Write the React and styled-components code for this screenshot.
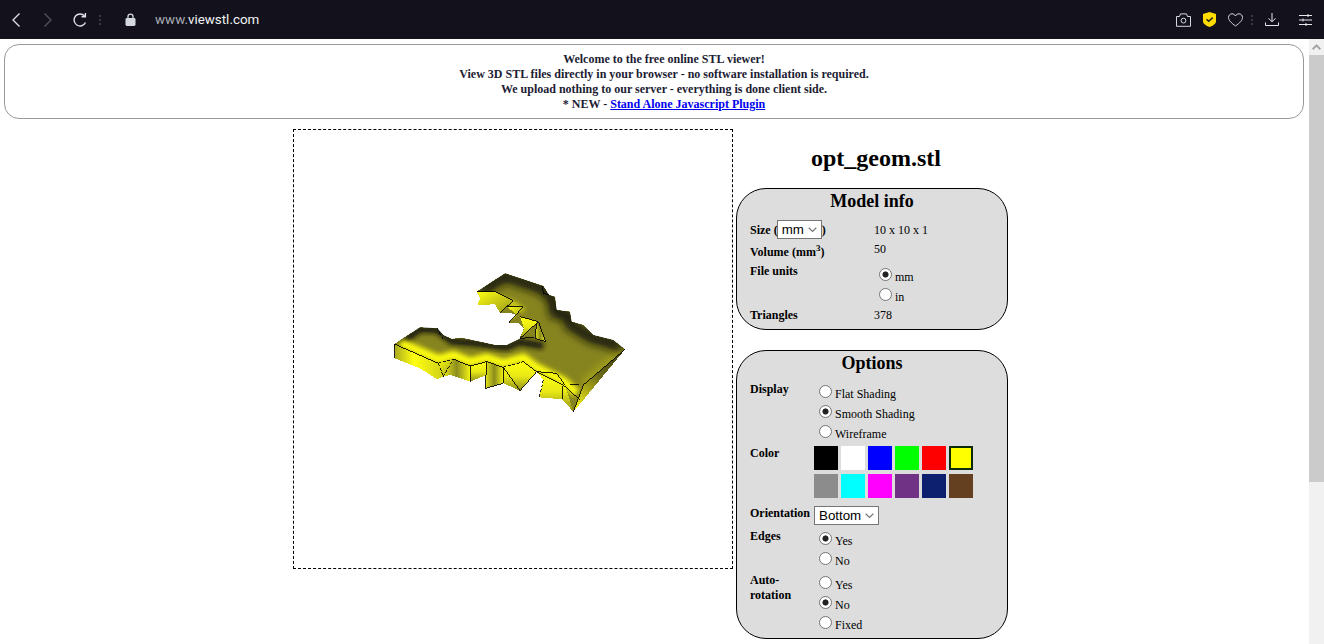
import React from "react";
import styled, { createGlobalStyle } from "styled-components";

const GlobalStyle = createGlobalStyle`
  html, body {
    margin: 0;
    padding: 0;
    height: 100%;
    overflow: hidden;
    background: #fff;
  }
  body {
    font-family: "Liberation Serif", "Times New Roman", serif;
    font-size: 12px;
    color: #000;
  }
`;

const topSurface =
  "43,252 120,202 172,205 190,225 215,237 245,233 290,243 345,255 380,255 418,237 432,205 415,190 385,190 412,165 385,158 362,158 345,133 292,135 300,115 290,95 375,40 490,78 507,105 525,110 530,150 570,155 575,185 610,195 640,225 700,240 735,268 610,375 580,455 555,375 470,335 430,305 370,322 320,305 270,318 220,297 175,310";

const sideFaces = [
  { points: "43,252 175,310 190,350 172,358 120,325 45,295", fill: "url(#wallLeft)" },
  { points: "175,310 220,297 190,350", fill: "url(#wallB)" },
  { points: "220,297 270,318 270,365 210,345 190,350", fill: "url(#wallD)" },
  { points: "270,318 320,305 320,345 270,365", fill: "url(#wallA)" },
  { points: "320,305 370,322 370,370 316,385", fill: "url(#wallD)" },
  { points: "370,322 430,305 470,335 420,392 370,370", fill: "url(#wallA)" },
  { points: "470,335 555,375 580,455 547,418 478,412 490,360", fill: "url(#wallA)" },
  { points: "735,268 610,375 580,455 610,420", fill: "url(#wallRight)" },
  { points: "290,95 345,95 400,122 360,158 345,133 292,135 300,115", fill: "url(#wallB)" },
  { points: "380,140 430,140 385,190 412,165", fill: "url(#wallB)" },
  { points: "420,170 475,185 420,235 432,205", fill: "url(#wallA)" },
  { points: "470,185 497,245 465,235", fill: "url(#wallD)" },
];

const edgeLines = [
  "43,252 175,310",
  "220,297 270,318 320,305 370,322",
  "430,305 470,335 550,375 600,420",
  "270,318 270,365",
  "320,305 316,385 370,370 370,322 420,392 470,335",
  "547,378 547,418",
  "735,268 610,375 580,455",
  "470,335 530,340 555,375",
  "570,373 597,373",
  "290,95 345,95 400,122 360,158",
  "380,140 430,140 385,190",
  "420,170 475,185 420,235 462,232",
  "475,185 497,245 465,235 470,190",
  "487,78 490,100 507,105",
  "43,252 45,295",
];

// these edges flicker through the surface in the viewer, so they come out broken
const brokenLines = [
  "175,310 220,297",
  "370,322 430,305",
  "175,310 190,350",
  "190,350 220,297",
  "490,360 478,412",
  "172,205 190,240",
];

const Model = () => (
  <ModelSvg viewBox="0 0 780 480">
    <defs>
      <linearGradient id="wallLeft" x1="0" y1="0" x2="1" y2="0">
        <stop offset="0" stopColor="#a8a820" />
        <stop offset="0.4" stopColor="#ffff10" />
        <stop offset="1" stopColor="#d0d018" />
      </linearGradient>
      <linearGradient id="wallA" x1="0" y1="0" x2="0" y2="1">
        <stop offset="0" stopColor="#ffff10" />
        <stop offset="0.5" stopColor="#e8e816" />
        <stop offset="1" stopColor="#8f8f1e" />
      </linearGradient>
      <linearGradient id="wallB" x1="0" y1="0" x2="1" y2="1">
        <stop offset="0" stopColor="#ffff10" />
        <stop offset="1" stopColor="#98981c" />
      </linearGradient>
      <linearGradient id="wallRight" gradientUnits="userSpaceOnUse" x1="730" y1="265" x2="590" y2="440">
        <stop offset="0" stopColor="#3a3a12" />
        <stop offset="0.5" stopColor="#6e6c18" />
        <stop offset="1" stopColor="#f0ee14" />
      </linearGradient>
      <linearGradient id="wallD" x1="0" y1="0" x2="1" y2="0">
        <stop offset="0" stopColor="#e6e618" />
        <stop offset="0.5" stopColor="#8c8c1e" />
        <stop offset="1" stopColor="#f2f214" />
      </linearGradient>
      <clipPath id="topClip">
        <polygon points={topSurface} />
      </clipPath>
      <filter id="softSmall" x="-30%" y="-30%" width="160%" height="160%">
        <feGaussianBlur stdDeviation="8" />
      </filter>
      <filter id="softWide" x="-30%" y="-30%" width="160%" height="160%">
        <feGaussianBlur stdDeviation="13" />
      </filter>
    </defs>
    <polygon points={topSurface} fill="#86841f" shapeRendering="crispEdges" />
    <g clipPath="url(#topClip)">
      <polyline
        points="60,250 120,207 172,210 215,244 290,250 380,262 418,246 490,258"
        fill="none"
        stroke="#14140a"
        strokeWidth="20"
        filter="url(#softSmall)"
      />
      <polyline
        points="300,95 375,48 488,86 520,118 525,158 565,163 570,193 635,233 695,248 730,272"
        fill="none"
        stroke="#14140a"
        strokeWidth="34"
        filter="url(#softWide)"
      />
      <polyline
        points="60,248 175,298 220,285 270,306 320,293 370,310 430,293 470,323 550,363 590,400"
        fill="none"
        stroke="#ffff10"
        strokeWidth="26"
        filter="url(#softSmall)"
      />
      <polyline
        points="330,108 400,132 430,152"
        fill="none"
        stroke="#f4f212"
        strokeWidth="12"
        filter="url(#softSmall)"
      />
      <polyline
        points="735,268 610,375"
        fill="none"
        stroke="#c8c61a"
        strokeWidth="20"
        opacity="0.6"
        filter="url(#softWide)"
      />
    </g>
    {sideFaces.map((face) => (
      <polygon key={face.points} points={face.points} fill={face.fill} shapeRendering="crispEdges" />
    ))}
    {edgeLines.map((line) => (
      <polyline key={line} points={line} fill="none" stroke="#000" strokeWidth="2.6" shapeRendering="crispEdges" />
    ))}
    {brokenLines.map((line) => (
      <polyline key={line} points={line} fill="none" stroke="#000" strokeWidth="2.6" strokeDasharray="9 5" shapeRendering="crispEdges" />
    ))}
  </ModelSvg>
);

const BackIcon = ({ dim }) => (
  <svg width="10" height="16" viewBox="0 0 10 16" fill="none" stroke={dim ? "#55545c" : "#dfe1e6"} strokeWidth="1.3">
    {dim ? <path d="M1.500 1.500 8 8l-6.500 6.500" /> : <path d="M8.500 1.500 2 8l6.500 6.500" />}
  </svg>
);

const ReloadIcon = () => (
  <svg width="16" height="16" viewBox="0 0 16 16" fill="none" stroke="#dfe1e6" strokeWidth="1.4">
    <path d="M13.500 10.500A6 6 0 1 1 12.600 4" />
    <path d="M13.400 .9v3.800H9.600" />
  </svg>
);

const LockIcon = () => (
  <svg width="11" height="13" viewBox="0 0 11 13">
    <path d="M3 5.500V3.600a2.500 2.500 0 0 1 5 0v1.900" fill="none" stroke="#d5d8de" strokeWidth="1.300" />
    <rect x="0.500" y="5" width="10" height="8" rx="1.400" fill="#d5d8de" />
  </svg>
);

const CameraIcon = () => (
  <svg width="15" height="14" viewBox="0 0 15 14" fill="none" stroke="#d5d8de" strokeWidth="1">
    <path d="M.5 3.500h3l1-2.600h6l1 2.600h3v9.800H.5z" />
    <circle cx="7.500" cy="7.600" r="2.400" />
  </svg>
);

const ShieldIcon = () => (
  <svg width="13" height="15" viewBox="0 0 13 15">
    <path d="M6.500 0 13 2v7.500c0 2-3 4.400-6.500 5.500C3 13.900 0 11.500 0 9.500V2z" fill="#ffdd00" />
    <path d="M3.500 7.200 5.700 9.300 9.700 5.600" fill="none" stroke="#222" strokeWidth="1.500" />
  </svg>
);

const HeartIcon = () => (
  <svg width="15" height="14" viewBox="0 0 15 14" fill="none" stroke="#d5d8de" strokeWidth="1">
    <path d="M7.500 13C3.500 10 .5 7.500 .5 4.500 .5 2.300 2.200.8 4 .8c1.500 0 2.800.8 3.500 2.200C8.200 1.600 9.500.8 11 .8c1.800 0 3.500 1.500 3.500 3.700 0 3-3 5.500-7 8.500z" />
  </svg>
);

const DownloadIcon = () => (
  <svg width="14" height="13" viewBox="0 0 14 13" fill="none" stroke="#e6e8ec" strokeWidth="1">
    <path d="M7 0v8.500M3.500 5.300 7 8.800l3.500-3.500M.5 9.500v3h13v-3" />
  </svg>
);

const SlidersIcon = () => (
  <svg width="13" height="12" viewBox="0 0 13 12" fill="none" stroke="#e6e8ec" strokeWidth="1">
    <path d="M0 1.500h13M0 6h13M0 10.500h13M9 0v3M4 4.500v3M7 9v3" />
  </svg>
);

const swatches = [
  "#000000", "#ffffff", "#0000ff", "#00ff00", "#ff0000", "#ffff00",
  "#8c8c8c", "#00ffff", "#ff00ff", "#6f3284", "#0d2070", "#644020",
];

const RadioGroup = ({ name, options, checked, top }) => (
  <RadioColumn $top={top}>
    {options.map((option) => (
      <RadioLine key={option}>
        <input type="radio" name={name} defaultChecked={option === checked} />
        {option}
      </RadioLine>
    ))}
  </RadioColumn>
);

export default function App() {
  return (
    <>
      <GlobalStyle />
      <Shell>
        <BrowserBar>
          <NavButton $w={32}><BackIcon /></NavButton>
          <NavButton $w={32}><BackIcon dim /></NavButton>
          <NavButton $w={32}><ReloadIcon /></NavButton>
          <BarDots />
          <LockSlot><LockIcon /></LockSlot>
          <Url>www.<b>viewstl.com</b></Url>
          <BarRight>
            <NavButton $w={26}><CameraIcon /></NavButton>
            <NavButton $w={26}><ShieldIcon /></NavButton>
            <NavButton $w={26}><HeartIcon /></NavButton>
            <BarDots />
            <NavButton $w={32}><DownloadIcon /></NavButton>
            <NavButton $w={34}><SlidersIcon /></NavButton>
          </BarRight>
        </BrowserBar>
        <Viewport>
          <Page>
            <Banner>
              Welcome to the free online STL viewer!<br />
              View 3D STL files directly in your browser - no software installation is required.<br />
              We upload nothing to our server - everything is done client side.<br />
              * NEW - <a href="#plugin">Stand Alone Javascript Plugin</a>
            </Banner>
            <Main>
              <Viewer><Model /></Viewer>
              <Side>
                <FileName>opt_geom.stl</FileName>
                <Panel $height={142}>
                  <PanelTitle>Model info</PanelTitle>
                  <Row $label={124} $height={22}>
                    <SizeLabel>Size (<select defaultValue="mm"><option>mm</option><option>in</option></select>)</SizeLabel>
                    <Value $top={3}>10 x 10 x 1</Value>
                  </Row>
                  <Row $label={124} $height={20}>
                    <Label $top={3}>Volume (mm<sup>3</sup>)</Label>
                    <Value $top={0}>50</Value>
                  </Row>
                  <Row $label={124} $height={44}>
                    <Label $top={2}>File units</Label>
                    <RadioGroup name="units" options={["mm", "in"]} checked="mm" top={3} />
                  </Row>
                  <Row $label={124} $height={18}>
                    <Label $top={2}>Triangles</Label>
                    <Value $top={2}>378</Value>
                  </Row>
                </Panel>
                <Panel $height={289} $gap={20}>
                  <PanelTitle>Options</PanelTitle>
                  <Row $label={64} $height={64}>
                    <Label>Display</Label>
                    <RadioGroup name="display" options={["Flat Shading", "Smooth Shading", "Wireframe"]} checked="Smooth Shading" />
                  </Row>
                  <Row $label={64} $height={60}>
                    <Label>Color</Label>
                    <Swatches>
                      {swatches.map((color) => (
                        <Swatch key={color} $color={color} $active={color === "#ffff00"} />
                      ))}
                    </Swatches>
                  </Row>
                  <Row $label={64} $height={23}>
                    <Label>Orientation</Label>
                    <select defaultValue="Bottom"><option>Bottom</option><option>Top</option></select>
                  </Row>
                  <Row $label={64} $height={44}>
                    <Label>Edges</Label>
                    <RadioGroup name="edges" options={["Yes", "No"]} checked="Yes" />
                  </Row>
                  <Row $label={64} $height={60}>
                    <Label>Auto-<br />rotation</Label>
                    <RadioGroup name="rotation" options={["Yes", "No", "Fixed"]} checked="No" />
                  </Row>
                </Panel>
              </Side>
            </Main>
          </Page>
          <Scrollbar>
            <ScrollButton>
              <svg width="9" height="6" viewBox="0 0 9 6"><path d="M4.500 0 9 4.500 7.700 6 4.500 2.800 1.300 6 0 4.500z" fill="#a3a3a3" /></svg>
            </ScrollButton>
            <ScrollThumb />
          </Scrollbar>
        </Viewport>
      </Shell>
    </>
  );
}

const Shell = styled.div`
  height: 100vh;
  display: flex;
  flex-direction: column;
`;

const BrowserBar = styled.div`
  height: 39px;
  flex: none;
  display: flex;
  align-items: center;
  background: #13121c;
`;

const NavButton = styled.div`
  width: ${(p) => p.$w}px;
  display: flex;
  justify-content: center;
  align-items: center;
`;

const BarDots = styled.span`
  width: 2px;
  height: 10px;
  margin: 0 3px;
  flex: none;
  background: repeating-linear-gradient(#3a3a44 0 2px, transparent 2px 4px);
`;

const LockSlot = styled.div`
  margin-left: 21px;
  display: flex;
`;

const Url = styled.div`
  margin-left: 19px;
  font-family: "Roboto", "Liberation Sans", sans-serif;
  font-size: 13.4px;
  color: #a9adb5;

  & b {
    font-weight: 400;
    color: #f2f3f5;
  }
`;

const BarRight = styled.div`
  margin-left: auto;
  display: flex;
  align-items: center;
  padding-right: 2px;
`;

const Viewport = styled.div`
  flex: 1;
  min-height: 0;
  display: flex;
`;

const Page = styled.div`
  flex: 1;
  min-width: 0;
  overflow: hidden;
`;

const Banner = styled.div`
  margin: 5px 5px 0 4px;
  padding: 7px 0 6px 20px;
  height: 75px;
  box-sizing: border-box;
  border: 1px solid #999;
  border-radius: 15px;
  text-align: center;
  font-weight: 700;
  font-size: 12px;
  line-height: 15px;
  color: #1c1c33;

  & a {
    color: #0000ee;
  }
`;

const Main = styled.div`
  margin: 10px 0 0 293px;
  display: flex;
  gap: 3px;
`;

const Viewer = styled.div`
  width: 440px;
  height: 440px;
  flex: none;
  box-sizing: border-box;
  border: 1px dashed #000;
  padding: 130px 0 0 86px;
`;

const ModelSvg = styled.svg`
  display: block;
  width: 260px;
  height: 160px;
`;

const Side = styled.div`
  width: 272px;
  flex: none;
`;

const FileName = styled.h1`
  margin: 15px 0 16px;
  padding-left: 8px;
  text-align: center;
  font-size: 24px;
  line-height: 28px;
  font-weight: 700;
  white-space: nowrap;
`;

const Panel = styled.section`
  height: ${(p) => p.$height}px;
  margin-top: ${(p) => p.$gap || 0}px;
  box-sizing: border-box;
  padding: 2px 0 0 13px;
  border: 1px solid #000;
  border-radius: 30px;
  background: #ddd;

  & select {
    appearance: none;
    height: 19px;
    padding: 0 16px 0 4px;
    font-family: "Liberation Sans", Arial, sans-serif;
    font-size: 13.33px;
    color: #000;
    background: #fff url("data:image/svg+xml,%3Csvg xmlns='http://www.w3.org/2000/svg' width='9' height='6'%3E%3Cpath d='M.7.8 4.500 4.500 8.300.8' fill='none' stroke='%23777' stroke-width='1.200'/%3E%3C/svg%3E") no-repeat right 4px center;
    border: 1px solid #767676;
    border-radius: 0;
    justify-self: start;
    outline: none;
  }
`;

const PanelTitle = styled.h3`
  margin: 0 0 8px -13px;
  text-align: center;
  font-size: 18px;
  line-height: 21px;
  font-weight: 700;
`;

const Row = styled.div`
  display: grid;
  grid-template-columns: ${(p) => p.$label}px 1fr;
  height: ${(p) => p.$height}px;
  line-height: 15px;
`;

const Label = styled.div`
  font-weight: 700;
  padding-top: ${(p) => p.$top || 0}px;
  white-space: nowrap;

  & sup {
    font-size: 9px;
    line-height: 0;
  }
`;

const SizeLabel = styled.div`
  display: flex;
  align-items: center;
  align-self: start;
  height: 21px;
  font-weight: 700;
  white-space: pre;

  & select {
    margin: 0 0 2px -1px;
  }
`;

const Value = styled.div`
  padding-top: ${(p) => p.$top}px;
`;

const RadioColumn = styled.div`
  padding-top: ${(p) => p.$top || 0}px;
`;

const RadioLine = styled.label`
  display: block;
  height: 20px;
  line-height: 20px;

  & input {
    appearance: none;
    box-sizing: border-box;
    width: 13px;
    height: 13px;
    margin: 3px 3px 0 5px;
    border: 1px solid #767676;
    border-radius: 50%;
    background: #fff;
  }

  & input:checked {
    background: radial-gradient(circle, #222 0 2.7px, #fff 3.4px);
  }
`;

const Swatches = styled.div`
  display: grid;
  grid-template-columns: repeat(6, 24px);
  grid-auto-rows: 24px;
  gap: 4px 3px;
`;

const Swatch = styled.div`
  box-sizing: border-box;
  background: ${(p) => p.$color};
  border: ${(p) => (p.$active ? "2px solid #0c2a0c" : "none")};
`;

const Scrollbar = styled.div`
  width: 15px;
  flex: none;
  background: #f1f1f1;
`;

const ScrollButton = styled.div`
  height: 16px;
  display: flex;
  align-items: center;
  justify-content: center;
`;

const ScrollThumb = styled.div`
  height: 427px;
  background: #cbcbcb;
`;
